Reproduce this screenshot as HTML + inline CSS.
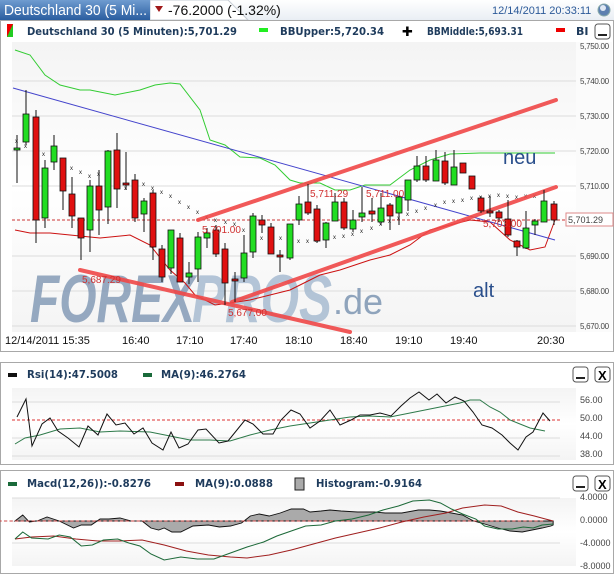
<!DOCTYPE html>
<html><head><meta charset="utf-8"><style>
body{margin:0;width:614px;height:575px;overflow:hidden;background:#fff;font-family:"Liberation Sans",sans-serif}
svg{display:block}
</style></head><body>
<svg width="614" height="575" viewBox="0 0 614 575" xmlns="http://www.w3.org/2000/svg" font-family="Liberation Sans, sans-serif">
<defs>
<linearGradient id="tab" x1="0" y1="0" x2="0" y2="1"><stop offset="0" stop-color="#6f9cd0"/><stop offset="1" stop-color="#2a5d9f"/></linearGradient>
<linearGradient id="hdr" x1="0" y1="0" x2="0" y2="1"><stop offset="0" stop-color="#ffffff"/><stop offset="1" stop-color="#e9eef4"/></linearGradient>
<linearGradient id="plot" x1="0" y1="0" x2="0" y2="1"><stop offset="0" stop-color="#f4f4f4"/><stop offset="0.5" stop-color="#ffffff"/><stop offset="1" stop-color="#f4f4f4"/></linearGradient>
</defs>
<rect x="0" y="0" width="614" height="20" fill="url(#hdr)"/>
<path d="M150 0 H228 L248 20 H150 Z" fill="#fff" stroke="#c6ccd4"/>
<rect x="0" y="0" width="150" height="20" fill="url(#tab)"/>
<text x="4" y="15" font-size="15" fill="#fff" textLength="143" lengthAdjust="spacingAndGlyphs">Deutschland 30 (5 Mi...</text>
<path d="M155 6 h8 l-4 6 z" fill="#a01818"/>
<text x="168" y="15" font-size="14" fill="#111">-76.2000 (-1.32%)</text>
<text x="492" y="14" font-size="11" fill="#2c5a99">12/14/2011 20:33:11</text>
<circle cx="604" cy="10" r="6" fill="#5c7fb0" stroke="#8aa" />
<circle cx="603" cy="8" r="3" fill="#dfe8f4"/>
<rect x="0.5" y="20.5" width="613" height="331" fill="#fff" stroke="#a8a8a8"/>
<path d="M7 24 h6 v13 h-6 z" fill="#e00"/><path d="M7 37 L13 24 V37 Z" fill="#2c2"/>
<g font-size="11" font-weight="bold" fill="#1e3b5c" font-family="DejaVu Sans, sans-serif">
<text x="27" y="35" textLength="210" lengthAdjust="spacingAndGlyphs">Deutschland 30 (5 Minuten):5,701.29</text>
<rect x="259" y="28" width="9" height="4" fill="#2e2"/>
<text x="280" y="35" textLength="104" lengthAdjust="spacingAndGlyphs">BBUpper:5,720.34</text>
<text x="402" y="36" font-size="13" fill="#000">✚</text>
<text x="427" y="35" textLength="96" lengthAdjust="spacingAndGlyphs">BBMiddle:5,693.31</text>
<rect x="556" y="28" width="9" height="4" fill="#e00"/>
<text x="576" y="35">BI</text>
</g>
<rect x="595" y="24" width="15" height="15" rx="3" fill="#fff" stroke="#555"/><rect x="598" y="34" width="9" height="2" fill="#222"/>
<rect x="12" y="42" width="564" height="290" fill="url(#plot)"/>
<rect x="576" y="42" width="36" height="290" fill="#fbfbfb"/>
<g stroke="#dcdcdc" stroke-width="1">
<line x1="12" y1="81" x2="576" y2="81"/><line x1="12" y1="116" x2="576" y2="116"/><line x1="12" y1="151" x2="576" y2="151"/><line x1="12" y1="186" x2="576" y2="186"/><line x1="12" y1="256" x2="576" y2="256"/><line x1="12" y1="291" x2="576" y2="291"/><line x1="12" y1="326" x2="576" y2="326"/>
</g>
<g font-size="8" fill="#444" letter-spacing="-0.3">
<text x="580" y="49">5,750.00</text><text x="580" y="84">5,740.00</text><text x="580" y="119">5,730.00</text><text x="580" y="154">5,720.00</text><text x="580" y="189">5,710.00</text><text x="580" y="259">5,690.00</text><text x="580" y="294">5,680.00</text><text x="580" y="329">5,670.00</text>
</g>
<text x="30" y="322" font-size="68" font-weight="bold" font-style="italic" fill="#7e96b3" opacity="0.8" textLength="165" lengthAdjust="spacingAndGlyphs">FOREX</text>
<text x="192" y="322" font-size="68" font-weight="bold" font-style="italic" fill="#a3b8cf" opacity="0.8" textLength="140" lengthAdjust="spacingAndGlyphs">PROS</text>
<text x="333" y="314" font-size="36" fill="#7e96b3" opacity="0.85">.de</text>
<line x1="12" y1="220" x2="576" y2="220" stroke="#c33" stroke-dasharray="3,2"/>
<polyline fill="none" stroke="#3c3" stroke-width="1" points="15,50 30,55 45,75 60,85 80,90 90,90 100,92 115,95 140,90 155,85 170,83 180,84 200,110 210,140 225,145 240,157 260,158 275,165 290,180 300,183 320,183 335,190 350,190 365,185 390,185 410,170 430,160 450,154 480,153 520,153 555,153"/>
<polyline fill="none" stroke="#c11" stroke-width="1" points="15,230 30,233 50,233 70,235 100,238 130,235 150,245 170,270 185,283 195,295 215,305 230,303 250,300 270,295 290,290 300,285 320,275 340,270 370,260 390,255 410,245 430,230 450,225 470,220 490,222 510,240 530,250 545,247 555,220"/>
<line x1="13" y1="88" x2="555" y2="240" stroke="#44c" stroke-width="1"/>
<g fill="#222" font-size="6">
<text x="15" y="143">x</text><text x="24" y="148">x</text><text x="33" y="152">x</text><text x="42" y="156">x</text><text x="52" y="160">x</text><text x="61" y="165">x</text><text x="70" y="170">x</text><text x="79" y="174">x</text><text x="88" y="178">x</text><text x="97" y="176">x</text><text x="106" y="182">x</text><text x="115" y="186">x</text><text x="124" y="190">x</text><text x="133" y="185">x</text><text x="142" y="186">x</text><text x="151" y="190">x</text><text x="160" y="194">x</text><text x="169" y="198">x</text><text x="178" y="204">x</text><text x="187" y="209">x</text><text x="196" y="214">x</text><text x="205" y="219">x</text><text x="214" y="222">x</text><text x="224" y="224">x</text><text x="233" y="226">x</text><text x="242" y="232">x</text><text x="251" y="238">x</text><text x="260" y="240">x</text><text x="269" y="244">x</text><text x="279" y="240">x</text><text x="288" y="243">x</text><text x="297" y="243">x</text><text x="306" y="243">x</text><text x="315" y="242">x</text><text x="324" y="240">x</text><text x="333" y="239">x</text><text x="342" y="238">x</text><text x="351" y="236">x</text><text x="360" y="233">x</text><text x="370" y="230">x</text><text x="379" y="226">x</text><text x="388" y="223">x</text><text x="397" y="220">x</text><text x="406" y="216">x</text><text x="415" y="213">x</text><text x="424" y="210">x</text><text x="434" y="207">x</text><text x="443" y="204">x</text><text x="452" y="203">x</text><text x="461" y="202">x</text><text x="470" y="200">x</text><text x="479" y="199">x</text><text x="488" y="198">x</text><text x="497" y="197">x</text><text x="506" y="198">x</text><text x="515" y="199">x</text><text x="524" y="198">x</text><text x="533" y="198">x</text>
</g>
<g stroke="#f04848" stroke-width="4" stroke-linecap="round" opacity="0.9">
<line x1="198" y1="220" x2="556" y2="100"/>
<line x1="232" y1="302" x2="556" y2="187"/>
<line x1="80" y1="270" x2="350" y2="332"/>
</g>
<g stroke="#111" stroke-width="1">
<line x1="17" y1="135" x2="17" y2="183"/><line x1="26" y1="90" x2="26" y2="145"/><line x1="36" y1="110" x2="36" y2="243"/><line x1="45" y1="160" x2="45" y2="228"/><line x1="54" y1="135" x2="54" y2="170"/><line x1="63" y1="158" x2="63" y2="210"/><line x1="72" y1="177" x2="72" y2="228"/><line x1="81" y1="218" x2="81" y2="260"/><line x1="90" y1="180" x2="90" y2="252"/><line x1="99" y1="170" x2="99" y2="235"/><line x1="108" y1="150" x2="108" y2="224"/><line x1="117" y1="133" x2="117" y2="208"/><line x1="126" y1="152" x2="126" y2="190"/><line x1="135" y1="174" x2="135" y2="222"/><line x1="144" y1="198" x2="144" y2="232"/><line x1="153" y1="190" x2="153" y2="260"/><line x1="162" y1="245" x2="162" y2="282"/><line x1="171" y1="230" x2="171" y2="274"/><line x1="180" y1="233" x2="180" y2="282"/><line x1="189" y1="262" x2="189" y2="284"/><line x1="198" y1="232" x2="198" y2="282"/><line x1="207" y1="228" x2="207" y2="248"/><line x1="216" y1="225" x2="216" y2="257"/><line x1="225" y1="243" x2="225" y2="305"/><line x1="235" y1="272" x2="235" y2="302"/><line x1="244" y1="235" x2="244" y2="282"/><line x1="253" y1="213" x2="253" y2="258"/><line x1="262" y1="215" x2="262" y2="233"/><line x1="271" y1="223" x2="271" y2="254"/><line x1="280" y1="250" x2="280" y2="272"/><line x1="290" y1="224" x2="290" y2="260"/><line x1="299" y1="196" x2="299" y2="225"/><line x1="308" y1="184" x2="308" y2="215"/><line x1="317" y1="205" x2="317" y2="243"/><line x1="326" y1="222" x2="326" y2="248"/><line x1="335" y1="193" x2="335" y2="221"/><line x1="344" y1="198" x2="344" y2="230"/><line x1="353" y1="210" x2="353" y2="232"/><line x1="362" y1="187" x2="362" y2="222"/><line x1="372" y1="198" x2="372" y2="222"/><line x1="381" y1="193" x2="381" y2="225"/><line x1="390" y1="203" x2="390" y2="230"/><line x1="399" y1="196" x2="399" y2="225"/><line x1="408" y1="180" x2="408" y2="211"/><line x1="417" y1="156" x2="417" y2="182"/><line x1="426" y1="156" x2="426" y2="182"/><line x1="436" y1="150" x2="436" y2="181"/><line x1="445" y1="152" x2="445" y2="185"/><line x1="454" y1="150" x2="454" y2="185"/><line x1="463" y1="163" x2="463" y2="173"/><line x1="472" y1="176" x2="472" y2="189"/><line x1="481" y1="196" x2="481" y2="213"/><line x1="490" y1="196" x2="490" y2="217"/><line x1="499" y1="210" x2="499" y2="222"/><line x1="508" y1="200" x2="508" y2="237"/><line x1="517" y1="240" x2="517" y2="256"/><line x1="526" y1="211" x2="526" y2="249"/><line x1="535" y1="219" x2="535" y2="235"/><line x1="544" y1="190" x2="544" y2="222"/><line x1="554" y1="201" x2="554" y2="225"/>
</g>
<g stroke="#111" stroke-width="0.8">
<g fill="#2d2">
<rect x="14" y="148" width="6" height="2"/><rect x="23" y="114" width="6" height="28"/><rect x="42" y="168" width="6" height="50"/><rect x="51" y="146" width="6" height="16"/><rect x="87" y="186" width="6" height="44"/><rect x="105" y="151" width="6" height="56"/><rect x="141" y="201" width="6" height="13"/><rect x="168" y="230" width="6" height="38"/><rect x="186" y="273" width="6" height="4"/><rect x="195" y="237" width="6" height="32"/><rect x="204" y="233" width="6" height="5"/><rect x="241" y="253" width="6" height="25"/><rect x="250" y="216" width="6" height="36"/><rect x="287" y="224" width="6" height="34"/><rect x="296" y="204" width="6" height="16"/><rect x="323" y="223" width="6" height="17"/><rect x="332" y="202" width="6" height="19"/><rect x="350" y="220" width="6" height="9"/><rect x="359" y="213" width="6" height="4"/><rect x="378" y="208" width="6" height="14"/><rect x="396" y="197" width="6" height="16"/><rect x="405" y="180" width="6" height="20"/><rect x="414" y="166" width="6" height="14"/><rect x="433" y="160" width="6" height="21"/><rect x="451" y="167" width="6" height="18"/><rect x="523" y="228" width="6" height="20"/><rect x="532" y="221" width="6" height="4"/><rect x="541" y="201" width="6" height="21"/>
</g>
<g fill="#e01010">
<rect x="33" y="117" width="6" height="103"/><rect x="60" y="158" width="6" height="33"/><rect x="69" y="194" width="6" height="22"/><rect x="78" y="218" width="6" height="20"/><rect x="96" y="186" width="6" height="24"/><rect x="114" y="150" width="6" height="39"/><rect x="123" y="183" width="6" height="2"/><rect x="132" y="180" width="6" height="38"/><rect x="150" y="193" width="6" height="54"/><rect x="159" y="249" width="6" height="28"/><rect x="177" y="238" width="6" height="44"/><rect x="213" y="230" width="6" height="24"/><rect x="222" y="249" width="6" height="34"/><rect x="232" y="279" width="6" height="2"/><rect x="259" y="220" width="6" height="5"/><rect x="268" y="227" width="6" height="27"/><rect x="277" y="255" width="6" height="2"/><rect x="305" y="202" width="6" height="11"/><rect x="314" y="209" width="6" height="32"/><rect x="341" y="202" width="6" height="26"/><rect x="369" y="211" width="6" height="3"/><rect x="387" y="205" width="6" height="11"/><rect x="423" y="166" width="6" height="14"/><rect x="442" y="161" width="6" height="22"/><rect x="460" y="163" width="6" height="10"/><rect x="469" y="176" width="6" height="13"/><rect x="478" y="198" width="6" height="13"/><rect x="487" y="211" width="6" height="2"/><rect x="496" y="212" width="6" height="6"/><rect x="505" y="219" width="6" height="16"/><rect x="514" y="241" width="6" height="6"/><rect x="551" y="204" width="6" height="16"/>
</g>
</g>
<g font-size="10" fill="#d03030">
<text x="82" y="283">5,687.29</text><text x="202" y="233">5,701.00</text><text x="228" y="316">5,677.00</text><text x="310" y="197">5,711.29</text><text x="366" y="197">5,711.00</text><text x="483" y="227">5,703.00</text>
</g>
<text x="503" y="164" font-size="20" fill="#2a4f8c">neu</text>
<text x="473" y="297" font-size="20" fill="#2a4f8c">alt</text>
<rect x="566" y="213" width="47" height="13" fill="#fff" stroke="#d88"/>
<text x="568" y="223" font-size="9" fill="#444">5,701.29</text>
<g font-size="11" fill="#111">
<text x="5" y="344">12/14/2011 15:35</text><text x="122" y="344">16:40</text><text x="176" y="344">17:10</text><text x="230" y="344">17:40</text><text x="285" y="344">18:10</text><text x="340" y="344">18:40</text><text x="395" y="344">19:10</text><text x="450" y="344">19:40</text><text x="537" y="344">20:30</text>
</g>
<!-- RSI panel -->
<rect x="0.5" y="362.5" width="613" height="102" fill="#fff" stroke="#a8a8a8"/>
<g font-size="11" font-weight="bold" fill="#1e3b5c" font-family="DejaVu Sans, sans-serif">
<rect x="8" y="373" width="9" height="4" fill="#111"/><text x="27" y="378" textLength="91" lengthAdjust="spacingAndGlyphs">Rsi(14):47.5008</text>
<rect x="143" y="373" width="9" height="4" fill="#1a6a3a"/><text x="161" y="378" textLength="85" lengthAdjust="spacingAndGlyphs">MA(9):46.2764</text>
</g>
<rect x="573" y="367" width="15" height="15" rx="3" fill="#fff" stroke="#555"/><rect x="576" y="377" width="9" height="2" fill="#222"/>
<rect x="595" y="367" width="15" height="15" rx="3" fill="#fff" stroke="#555"/><text x="598" y="380" font-size="13" font-weight="bold">X</text>
<rect x="12" y="388" width="564" height="72" fill="url(#plot)"/>
<g stroke="#dcdcdc"><line x1="12" y1="402" x2="560" y2="402"/><line x1="12" y1="438" x2="560" y2="438"/><line x1="12" y1="456" x2="560" y2="456"/></g>
<line x1="12" y1="420" x2="560" y2="420" stroke="#d33" stroke-dasharray="3,2"/>
<g font-size="9" fill="#444"><text x="580" y="403">56.00</text><text x="580" y="421">50.00</text><text x="580" y="439">44.00</text><text x="580" y="457">38.00</text></g>
<polyline fill="none" stroke="#2e7a4a" stroke-width="1" points="15,444 25,438 40,435 60,429 80,428 100,432 120,431 150,432 170,436 190,440 210,440 230,441 250,435 270,430 290,426 310,423 330,420 350,417 370,416 390,417 410,413 430,409 450,405 460,403 470,400 480,400 490,407 500,412 510,420 520,424 530,428 545,431"/>
<polyline fill="none" stroke="#111" stroke-width="1" points="17,417 26,399 32,446 42,424 50,418 58,431 68,438 79,447 88,426 98,435 107,414 116,425 125,423 134,434 143,428 152,443 163,450 171,432 179,448 188,444 198,430 206,429 219,443 228,441 245,420 253,424 263,434 273,434 281,420 291,410 300,414 310,428 320,421 330,410 340,425 351,420 360,415 370,415 380,413 391,416 401,406 410,398 419,392 429,400 437,394 446,403 455,397 464,401 473,412 482,425 492,428 502,435 510,443 518,450 526,437 533,432 543,413 550,421"/>
<!-- MACD panel -->
<rect x="0.5" y="470.5" width="613" height="103" fill="#fff" stroke="#a8a8a8"/>
<g font-size="11" font-weight="bold" fill="#1e3b5c" font-family="DejaVu Sans, sans-serif">
<rect x="8" y="482" width="9" height="4" fill="#1a6a3a"/><text x="27" y="487" textLength="124" lengthAdjust="spacingAndGlyphs">Macd(12,26)):-0.8276</text>
<rect x="175" y="482" width="9" height="4" fill="#8b1010"/><text x="195" y="487" textLength="78" lengthAdjust="spacingAndGlyphs">MA(9):0.0888</text>
<rect x="295" y="478" width="9" height="12" fill="#aaa" stroke="#222"/><text x="316" y="487" textLength="106" lengthAdjust="spacingAndGlyphs">Histogram:-0.9164</text>
</g>
<rect x="573" y="476" width="15" height="15" rx="3" fill="#fff" stroke="#555"/><rect x="576" y="486" width="9" height="2" fill="#222"/>
<rect x="595" y="476" width="15" height="15" rx="3" fill="#fff" stroke="#555"/><text x="598" y="489" font-size="13" font-weight="bold">X</text>
<rect x="12" y="498" width="564" height="68" fill="url(#plot)"/>
<g stroke="#dcdcdc"><line x1="12" y1="498" x2="560" y2="498"/><line x1="12" y1="543" x2="560" y2="543"/></g>
<g font-size="9" fill="#444"><text x="580" y="500">4.0000</text><text x="580" y="523">0.0000</text><text x="580" y="546">-4.0000</text><text x="580" y="569">-8.0000</text></g>
<g transform="translate(15,0) scale(1.105,1) translate(-15,0)">
<polygon fill="#aaa" stroke="#111" stroke-width="0.9" points="15,521 22,515 28,522 35,521 44,517 55,521 68,528 75,525 84,525 92,519 100,519 110,518 120,521 130,521 138,528 145,530 150,528 157,532 165,532 176,526 190,525 200,527 210,526 220,523 228,516 236,514 245,516 255,513 265,509 276,509 282,512 292,511 300,510 310,511 325,512 340,512 350,513 365,513 380,510 390,510 400,511 410,513 420,515 430,521 440,524 452,528 463,531 474,532 483,530 492,528 500,526 502,525 502,521 15,521"/>
<line x1="0" y1="521" x2="495" y2="521" stroke="#c44" stroke-dasharray="3,2"/>
<polyline fill="none" stroke="#a02020" stroke-width="1" points="15,539 30,537 50,536 70,539 90,541 110,541 130,540 150,545 170,551 190,555 210,557 225,558 245,555 265,550 285,544 305,538 325,533 345,528 365,522 385,517 405,513 420,508 440,505 455,506 470,512 485,516 495,519 502,521"/>
<polyline fill="none" stroke="#1e6a3a" stroke-width="1" points="15,539 22,532 30,538 45,539 55,535 65,537 75,546 85,545 95,540 108,539 118,543 128,546 138,554 150,560 165,557 180,559 195,559 210,553 225,547 240,542 252,536 265,531 278,526 292,525 305,521 320,519 335,515 348,510 362,506 375,501 390,500 400,503 410,509 420,514 432,519 440,526 452,529 465,529 475,527 484,528 492,525 502,524"/>
</g>
</svg>
</body></html>
